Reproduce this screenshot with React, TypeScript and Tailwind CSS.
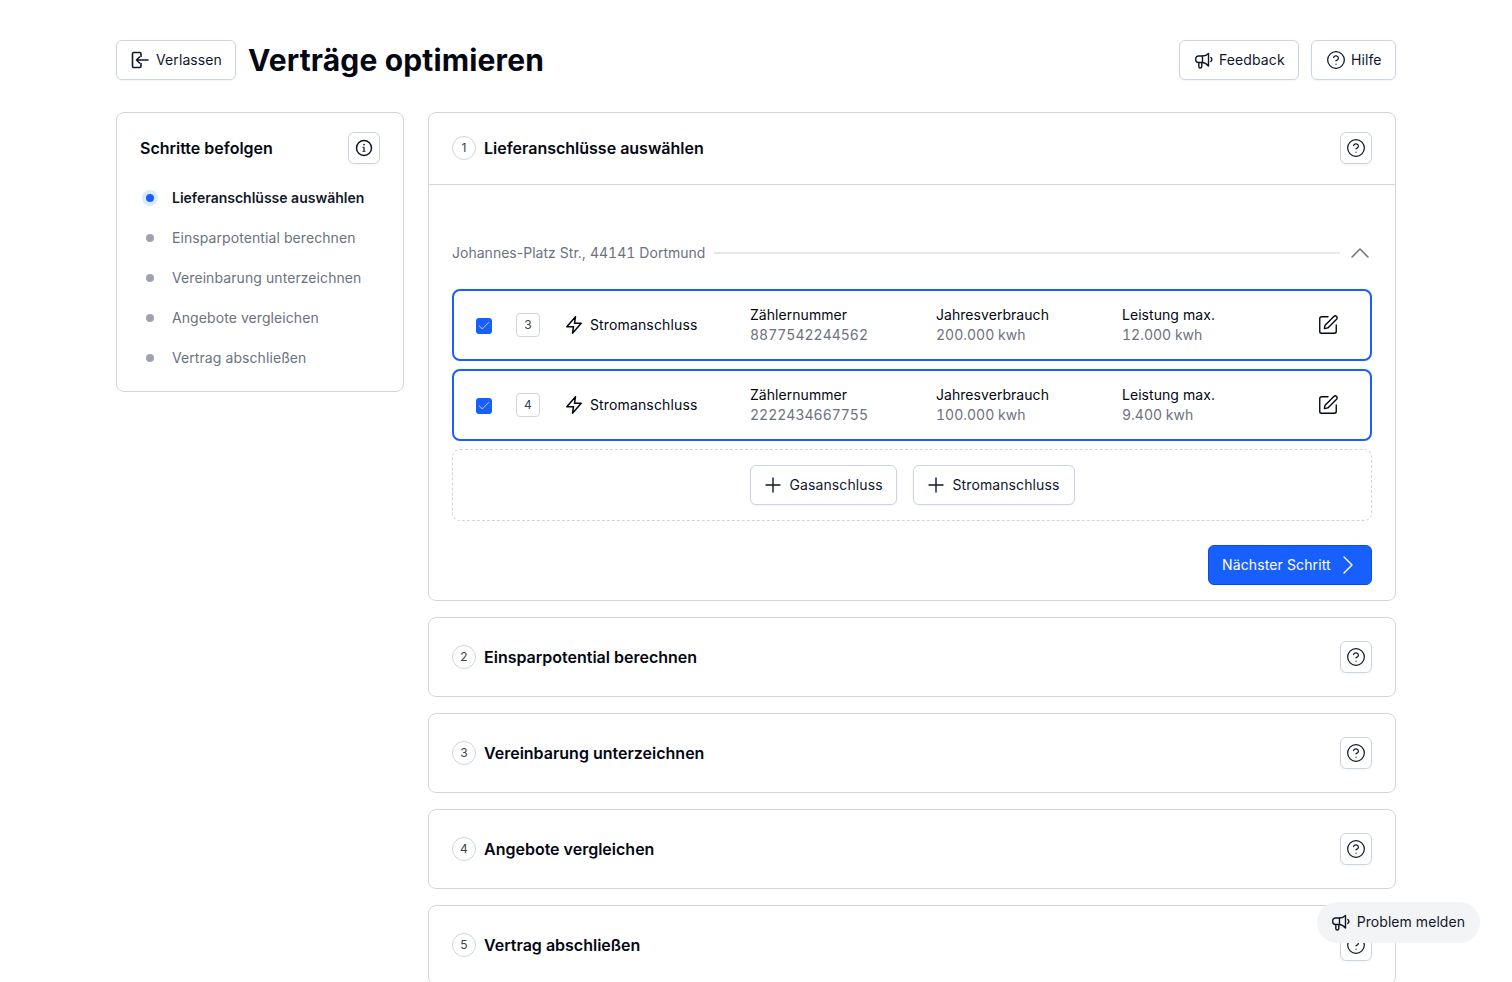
import React from 'react';
import { Check, CircleHelp, SquarePen } from 'lucide-react';

const font = { fontFamily: 'Inter, sans-serif' };

const steps = [
  'Lieferanschlüsse auswählen',
  'Einsparpotential berechnen',
  'Vereinbarung unterzeichnen',
  'Angebote vergleichen',
  'Vertrag abschließen',
];

const connections = [
  { id: 3, meter: '8877542244562', usage: '200.000 kwh', power: '12.000 kwh' },
  { id: 4, meter: '2222434667755', usage: '100.000 kwh', power: '9.400 kwh' },
];

function ExitIcon() {
  return (
    <svg width="20" height="20" viewBox="0 0 20 20" fill="none" stroke="currentColor" strokeWidth="1.6" strokeLinecap="round" strokeLinejoin="round">
      <path d="M11 6.5V3.8A1.3 1.3 0 0 0 9.7 2.5H3.8A1.3 1.3 0 0 0 2.5 3.8v12.4a1.3 1.3 0 0 0 1.3 1.3h5.9a1.3 1.3 0 0 0 1.3-1.3v-2.7" />
      <path d="M18 10H6.5M9.5 7 6.5 10l3 3" />
    </svg>
  );
}

function MegaphoneIcon() {
  return (
    <svg width="20" height="20" viewBox="0 0 20 20" fill="none" stroke="currentColor" strokeWidth="1.4" strokeLinecap="round" strokeLinejoin="round">
      <path d="M8.5 6H4.5A2.75 2.75 0 0 0 1.75 8.75v1A2.75 2.75 0 0 0 4.5 12.5h4" />
      <path d="M8.5 6c2.2 0 4.6-1 6-2.5v12.5c-1.4-1.5-3.8-3.5-6-3.5z" />
      <path d="M4.8 12.5v4a1.5 1.5 0 0 0 3 0v-4" />
      <path d="M16.8 7.5a2.4 2.4 0 0 1 0 4" />
    </svg>
  );
}

function InfoIcon() {
  return (
    <svg width="20" height="20" viewBox="0 0 20 20" fill="none" stroke="currentColor" strokeWidth="1.5" strokeLinecap="round" strokeLinejoin="round">
      <circle cx="10" cy="10" r="7.5" />
      <path d="M9 9.25h1V13.25M9 13.25h2" strokeWidth="1.2" />
      <path d="M10 6.6h.01" strokeWidth="1.7" />
    </svg>
  );
}

function ZapIcon() {
  return (
    <svg width="20" height="20" viewBox="0 0 20 20" fill="none" stroke="currentColor" strokeWidth="1.5" strokeLinejoin="round" className="ml-[24px] text-[#030712]">
      <path d="M11.5 1.8 2.8 11.8h6.7l-1 6.4 8.7-10h-6.7z" />
    </svg>
  );
}

function PlusIcon() {
  return (
    <svg width="24" height="24" viewBox="0 0 24 24" fill="none" stroke="currentColor" strokeWidth="1.4" strokeLinecap="round">
      <path d="M12 5v14M5 12h14" />
    </svg>
  );
}

function OutlineButton({ children, className = '' }: { children: React.ReactNode; className?: string }) {
  return (
    <button className={`flex h-10 items-center rounded-md border border-[#cbd5e1] bg-white text-sm font-normal tracking-[0.1px] text-[#0f172a] shadow-[0_1px_2px_rgba(15,23,42,0.05)] ${className}`}>
      {children}
    </button>
  );
}

function HelpButton() {
  return (
    <button className="flex h-8 w-8 items-center justify-center rounded-md border border-[#cbd5e1] bg-white text-[#0f172a] shadow-[0_1px_2px_rgba(15,23,42,0.05)]">
      <CircleHelp size={20} strokeWidth={1.5} />
    </button>
  );
}

function StepHeader({ index, title }: { index: number; title: string }) {
  return (
    <div className="flex items-center gap-2">
      <span className="flex h-6 w-6 items-center justify-center rounded-full border border-[#d1d5db] text-xs text-[#374151]">{index}</span>
      <h2 className="text-base leading-6 font-semibold text-[#030712]">{title}</h2>
    </div>
  );
}

function CollapsedStep({ index, title }: { index: number; title: string }) {
  return (
    <section className="flex h-20 shrink-0 items-center justify-between rounded-lg border border-[#d1d5db] bg-white px-[23px]">
      <StepHeader index={index} title={title} />
      <HelpButton />
    </section>
  );
}

function ConnectionRow({ id, meter, usage, power }: (typeof connections)[number]) {
  const columns = [
    ['Zählernummer', meter],
    ['Jahresverbrauch', usage],
    ['Leistung max.', power],
  ];
  return (
    <div className="flex h-[72px] items-center rounded-lg border-2 border-[#1760fd] pl-[22px]">
      <span className="mt-0.5 flex h-4 w-4 items-center justify-center rounded-[3px] bg-[#1760fd] text-white">
        <Check size={14} strokeWidth={1.25} />
      </span>
      <span className="ml-6 flex h-6 w-6 items-center justify-center rounded border border-[#d1d5db] text-xs text-[#374151]">{id}</span>
      <ZapIcon />
      <span className="ml-[6px] w-[160px] text-sm tracking-[0.14px] text-[#030712]">Stromanschluss</span>
      {columns.map(([label, value]) => (
        <div key={label} className="w-[186px] text-sm leading-5">
          <div className="tracking-[0.05px] text-[#030712]">{label}</div>
          <div className="text-[#6b7280] tabular-nums">{value}</div>
        </div>
      ))}
      <SquarePen size={22} strokeWidth={1.5} className="ml-[9px] text-[#030712]" />
    </div>
  );
}

export default function App() {
  return (
    <div className="h-screen overflow-hidden bg-white antialiased" style={font}>
      <div className="mx-auto w-[1280px] pt-10">
        <header className="flex items-center justify-between">
          <div className="flex items-center gap-3">
            <OutlineButton className="w-[120px] gap-[6px] pl-[13px]">
              <ExitIcon />
              Verlassen
            </OutlineButton>
            <h1 className="text-[30px] leading-10 font-bold tracking-[0.15px] text-[#030712]">Verträge optimieren</h1>
          </div>
          <div className="flex items-center gap-3">
            <OutlineButton className="w-[120px] gap-[5px] pl-[14px]">
              <MegaphoneIcon />
              Feedback
            </OutlineButton>
            <OutlineButton className="w-[85px] gap-[5px] pl-[14px]">
              <CircleHelp size={20} strokeWidth={1.5} />
              Hilfe
            </OutlineButton>
          </div>
        </header>

        <div className="mt-8 flex items-start gap-6">
          <aside className="h-[280px] w-[288px] shrink-0 rounded-lg border border-[#d1d5db] bg-white px-[23px] pt-[19px]">
            <div className="flex items-center justify-between">
              <h2 className="text-base leading-6 font-semibold text-[#030712]">Schritte befolgen</h2>
              <button className="flex h-8 w-8 items-center justify-center rounded-md border border-[#cbd5e1] text-[#0f172a] shadow-[0_1px_2px_rgba(15,23,42,0.05)]">
                <InfoIcon />
              </button>
            </div>
            <ul className="mt-[14px] flex flex-col">
              {steps.map((step, i) => (
                <li key={step} className="flex h-10 items-center gap-[14px]">
                  <span className={`ml-[2px] flex h-4 w-4 items-center justify-center rounded-full ${i === 0 ? 'bg-[#dbeafe]' : ''}`}>
                    <span className={`h-2 w-2 rounded-full ${i === 0 ? 'bg-[#1760fd]' : 'bg-[#9ca3af]'}`} />
                  </span>
                  <span className={i === 0 ? 'text-sm font-semibold text-[#111827]' : 'text-sm tracking-[0.08px] text-[#6b7280]'}>{step}</span>
                </li>
              ))}
            </ul>
          </aside>

          <main className="flex min-w-0 flex-1 flex-col gap-4">
            <section className="rounded-lg border border-[#d1d5db] bg-white">
              <div className="flex h-[72px] items-center justify-between border-b border-[#d1d5db] px-[23px] pb-px">
                <StepHeader index={1} title={steps[0]} />
                <HelpButton />
              </div>
              <div className="px-[23px] pt-[56px] pb-[15px]">
                <div className="flex h-6 items-center">
                  <span className="text-sm tracking-[0.02px] text-[#6b7280]">
                    Johannes-Platz Str., <span className="tabular-nums">44141</span> Dortmund
                  </span>
                  <span className="mr-2 ml-[9px] h-0.5 flex-1 bg-[#e5e7eb]" />
                  <svg width="24" height="24" viewBox="0 0 24 24" fill="none" stroke="#6b7280" strokeWidth="1.5" strokeLinecap="round" strokeLinejoin="round">
                    <path d="m4 16 8-8 8 8" />
                  </svg>
                </div>
                <div className="mt-6 flex flex-col gap-2">
                  {connections.map((c) => (
                    <ConnectionRow key={c.id} {...c} />
                  ))}
                  <div className="flex h-[72px] items-center justify-center gap-4 rounded-lg border border-dashed border-[#d1d5db]">
                    <OutlineButton className="w-[147px] gap-[5px] pl-[10px]">
                      <PlusIcon />
                      Gasanschluss
                    </OutlineButton>
                    <OutlineButton className="w-[162px] gap-[5px] pl-[10px]">
                      <PlusIcon />
                      Stromanschluss
                    </OutlineButton>
                  </div>
                </div>
                <div className="mt-6 flex justify-end">
                  <button className="flex h-10 w-[164px] items-center gap-[5px] rounded-md border border-[#0f4fd8] bg-[#1760fd] pl-[13px] text-sm tracking-[0.12px] text-white">
                    Nächster Schritt
                    <svg width="24" height="24" viewBox="0 0 24 24" fill="none" stroke="currentColor" strokeWidth="1.4" strokeLinecap="round" strokeLinejoin="round">
                      <path d="m8 4 8 8-8 8" />
                    </svg>
                  </button>
                </div>
              </div>
            </section>
            {steps.slice(1).map((step, i) => (
              <CollapsedStep key={step} index={i + 2} title={step} />
            ))}
          </main>
        </div>
      </div>

      <button className="fixed top-[902px] right-8 flex h-[41px] items-center gap-[6px] rounded-full bg-[#f3f4f6] pr-[15px] pb-px pl-[14px] text-sm tracking-[0.05px] text-[#111827]">
        <MegaphoneIcon />
        Problem melden
      </button>
    </div>
  );
}
